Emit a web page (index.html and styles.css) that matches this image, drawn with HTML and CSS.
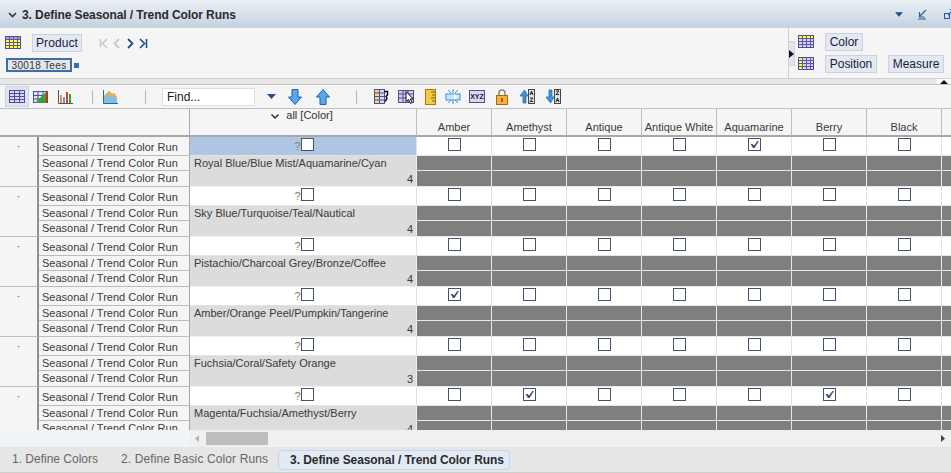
FILE: index.html
```html
<!DOCTYPE html>
<html lang="en">
<head>
<meta charset="utf-8">
<title>Define Seasonal / Trend Color Runs</title>
<link rel="stylesheet" href="styles.css">
</head>
<body>
<svg class="defs" width="0" height="0">
  <symbol id="check" viewBox="0 0 13 13"><path d="M2.500 6l2 0 1.500 1.500L9.500 3 11 3 6.500 10H5z" fill="#3f4f66"/></symbol>
  <symbol id="tbl" viewBox="0 0 16 14"><rect x=".5" y=".5" width="15" height="12" fill="#ffff30" stroke="#4f4a98"/><rect x="1" y="1" width="14" height="2" fill="#a8a4d8"/><path d="M.5 3.500h15M.5 6.500h15M.5 9.500h15M4.500.5v12M8.500.5v12M12.500.5v12" stroke="#5a56a8"/></symbol>
  <symbol id="tbl2" viewBox="0 0 16 14"><rect x=".5" y=".5" width="15" height="12" fill="#d5d3f0" stroke="#4f4a98"/><rect x="1" y="1" width="4" height="11" fill="#ffff30"/><path d="M.5 3.500h15M.5 6.500h15M.5 9.500h15M4.500.5v12M8.500.5v12M12.500.5v12" stroke="#5a56a8"/></symbol>
  <symbol id="tbl3" viewBox="0 0 16 14"><rect x=".5" y=".5" width="15" height="12" fill="#d5d3f0" stroke="#4f4a98"/><rect x="1" y="1" width="14" height="3" fill="#ffff30"/><path d="M.5 3.500h15M.5 6.500h15M.5 9.500h15M4.500.5v12M8.500.5v12M12.500.5v12" stroke="#5a56a8"/></symbol>
</svg>

<header class="titlebar">
  <svg class="chev" width="9" height="6" viewBox="0 0 9 6"><path d="M1 1l3.500 3.500L8 1" fill="none" stroke="#333" stroke-width="1.600"/></svg>
  <h1 class="title">3. Define Seasonal / Trend Color Runs</h1>
  <svg class="tb-drop" width="8" height="5" viewBox="0 0 9 5"><path d="M0 0h9L4.500 5z" fill="#1f4f8a"/></svg>
  <svg class="tb-min" width="9" height="11" viewBox="0 0 9 11"><path d="M8 1L2 7M1.500 3v5h5M0 10h8" fill="none" stroke="#27609c" stroke-width="1.200"/></svg>
  <svg class="tb-pop" width="9" height="11" viewBox="0 0 9 11"><path d="M.5 4.500h5v5h-5zM4 6l5-5M6 .5h3" fill="none" stroke="#27609c" stroke-width="1.200"/></svg>
</header>

<section class="pivot">
  <div class="pivot-left">
    <div class="pivot-row">
      <svg class="pv-icon" width="16" height="14"><use href="#tbl"/></svg>
      <span class="pbtn pb-prod">Product</span>
      <svg class="nav" width="50" height="11" viewBox="0 0 50 11">
        <path d="M1.500 1v8M8 1L3.500 5.500 8 10" fill="none" stroke="#c9c9c9" stroke-width="1.600"/>
        <path d="M20 1l-4.500 4.500L20 10" fill="none" stroke="#c9c9c9" stroke-width="1.800"/>
        <path d="M29 1l4.500 4.500L29 10" fill="none" stroke="#1f4f8a" stroke-width="1.800"/>
        <path d="M41 1l4.500 4.500L41 10M47.500 1v9" fill="none" stroke="#1f4f8a" stroke-width="1.600"/>
      </svg>
    </div>
    <div class="chip-row">
      <span class="chip">30018 Tees</span>
      <i class="chip-dot"></i>
    </div>
  </div>
  <div class="pivot-right">
    <span class="handle"><svg width="5" height="8" viewBox="0 0 5 8"><path d="M0 0l5 4-5 4z" fill="#111"/></svg></span>
    <div class="pr-rows">
      <div class="pr-row">
        <svg class="pv-icon" width="16" height="14"><use href="#tbl3"/></svg>
        <span class="pbtn pb-color">Color</span>
      </div>
      <div class="pr-row">
        <svg class="pv-icon" width="16" height="14"><use href="#tbl2"/></svg>
        <span class="pbtn pb-pos">Position</span>
        <span class="pbtn pb-meas">Measure</span>
      </div>
    </div>
  </div>
</section>

<div class="splitter">
  <span class="split-handle"><svg width="8" height="4" viewBox="0 0 8 4"><path d="M4 0l4 4H0z" fill="#111"/></svg></span>
</div>

<nav class="toolbar">
  <span class="tool sel"><svg width="16" height="13" viewBox="0 0 16 13"><rect x=".5" y=".5" width="15" height="12" fill="#d9d8f0" stroke="#4f4c9c"/><path d="M.5 3.500h15M.5 6.500h15M.5 9.500h15M5.500.5v12M10.500.5v12" stroke="#4f4c9c"/></svg></span>
  <span class="tool"><svg width="16" height="14" viewBox="0 0 16 14"><rect x=".5" y="1.500" width="14" height="11" fill="#e4e3f5" stroke="#4f4c9c"/><path d="M.5 5.500h14M.5 9h14M5 1.500v11M10 1.500v11" stroke="#4f4c9c"/><path d="M2 13L13 2v11z" fill="#3e9e3e"/><path d="M13 1h2v12h-2z" fill="#b8341e"/></svg></span>
  <span class="tool"><svg width="15" height="14" viewBox="0 0 15 14"><path d="M.5 0v13.500H15" fill="none" stroke="#555"/><path d="M2 5h2v8H2z" fill="#e9885a"/><path d="M5 7h2v6H5z" fill="#5aa0d8"/><path d="M8 2h2v11H8z" fill="#c9452e"/><path d="M11 4h2v9h-2z" fill="#3e9e3e"/></svg></span>
  <i class="sep s1"></i>
  <span class="tool"><svg width="15" height="14" viewBox="0 0 15 14"><path d="M.5 0v13.500H15" fill="none" stroke="#1f6f8a"/><path d="M1 13V6l5-5 3 3 2-1 3 4v6z" fill="#7fbfe8"/><path d="M1 6l5-5 3 3 2-1 3 4v2l-3-3-2 1-3-3-5 5z" fill="#eeb04a"/></svg></span>
  <i class="sep s2"></i>
  <span class="find">Find...</span>
  <svg class="find-drop" width="9" height="5" viewBox="0 0 9 5"><path d="M0 0h9L4.500 5z" fill="#1f4f8a"/></svg>
  <svg class="arrow a-down" width="14" height="16" viewBox="0 0 14 16"><path d="M4 .5h6V8h3.500L7 15.500.5 8H4z" fill="#58a8ee" stroke="#1f5fa8"/></svg>
  <svg class="arrow a-up" width="14" height="16" viewBox="0 0 14 16"><path d="M4 15.500h6V8h3.500L7 .5.5 8H4z" fill="#58a8ee" stroke="#1f5fa8"/></svg>
  <i class="sep s3"></i>
  <svg class="ic i1" width="16" height="15" viewBox="0 0 16 15"><rect x=".5" y=".5" width="10" height="14" fill="#f4d86a" stroke="#4f4c9c"/><rect x="6" y="1" width="4" height="13" fill="#d9d8f0"/><path d="M.5 4h10M.5 7.500h10M.5 11h10M5.500.5v14" stroke="#4f4c9c"/><path d="M10 2.500h3.500v3.500l-1.500 1.500 1 2-2 3" fill="none" stroke="#111" stroke-width="1.500"/></svg>
  <svg class="ic i2" width="16" height="14" viewBox="0 0 16 14"><rect x=".5" y=".5" width="15" height="12" fill="#cfcdea" stroke="#4f4c9c"/><path d="M.5 4h15M.5 8h15M5 .5v12M10 .5v12" stroke="#4f4c9c"/><path d="M8 1.500v10l2.500-2 2 4 1.800-1-2-3.500h3z" fill="#fff" stroke="#111" stroke-width="1"/></svg>
  <svg class="ic i3" width="11" height="16" viewBox="0 0 11 16"><rect x=".5" y=".5" width="10" height="15" fill="#f4c94a" stroke="#a8780a"/><path d="M6 3h4M7 6h3M6 9h4M7 12h3" stroke="#7a5a0a"/></svg>
  <svg class="ic i4" width="16" height="15" viewBox="0 0 16 15"><rect x="1" y="5" width="14" height="6" fill="#cfe6f8" stroke="#3c8fd0"/><path d="M9 5l3 3-3 3z" fill="#fff"/><path d="M8 0v4M8 11v4M3 1l3 3M13 1l-3 3M3 14l3-3M13 14l-3-3" stroke="#3c8fd0"/></svg>
  <span class="xyz">XYZ</span>
  <svg class="ic i6" width="12" height="16" viewBox="0 0 12 16"><path d="M3 7V4a3 3 0 016 0v3" fill="none" stroke="#8a8a8a" stroke-width="1.600"/><rect x=".5" y="6.500" width="11" height="9" fill="#f2b23c" stroke="#a86c0a"/><path d="M6 9v4" stroke="#7a4a0a" stroke-width="1.500"/></svg>
  <svg class="ic i7" width="16" height="15" viewBox="0 0 16 15"><path d="M4 14V7H1l4.500-6L9 7H7v7z" fill="#3f92e0" stroke="#1f5fa8" stroke-width=".7"/><rect x="9.500" y=".5" width="6" height="14" fill="#dfe3ec" stroke="#444"/><path d="M11 6l1.500-4L14 6M11 4.500h3M11 9h3l-3 3.500h3" fill="none" stroke="#222"/></svg>
  <svg class="ic i8" width="16" height="15" viewBox="0 0 16 15"><path d="M4 1v7H1l4.500 6L9 8H7V1z" fill="#3f92e0" stroke="#1f5fa8" stroke-width=".7"/><rect x="9.500" y=".5" width="6" height="14" fill="#dfe3ec" stroke="#444"/><path d="M11 2h3l-3 3.500h3M11 13l1.500-4 1.500 4M11 11.500h3" fill="none" stroke="#222"/></svg>
</nav>

<main class="grid">
  <div class="hd-corner"></div>
  <div class="hd-label"></div>
  <div class="hd-all"><svg width="8" height="5" viewBox="0 0 8 5"><path d="M.5.5L4 4 7.500.5" fill="none" stroke="#333" stroke-width="1.500"/></svg><span>all [Color]</span></div>
  <div class="hd">Amber</div><div class="hd">Amethyst</div><div class="hd">Antique</div><div class="hd">Antique White</div><div class="hd">Aquamarine</div><div class="hd">Berry</div><div class="hd">Black</div><div class="hd"></div>

  <div class="dot">·</div><div class="lab first">Seasonal / Trend Color Run</div><div class="q sel"><span class="qm">?</span><span class="cb"></span></div>
  <div class="c"><span class="cb"></span></div><div class="c"><span class="cb"></span></div><div class="c"><span class="cb"></span></div><div class="c"><span class="cb"></span></div><div class="c"><span class="cb on"><svg width="13" height="13"><use href="#check"/></svg></span></div><div class="c"><span class="cb"></span></div><div class="c"><span class="cb"></span></div><div class="c"><span class="cb"></span></div>
  <div class="lab">Seasonal / Trend Color Run</div><div class="name">Royal Blue/Blue Mist/Aquamarine/Cyan</div>
  <i class="g"></i><i class="g"></i><i class="g"></i><i class="g"></i><i class="g"></i><i class="g"></i><i class="g"></i><i class="g"></i>
  <div class="lab end">Seasonal / Trend Color Run</div><div class="num">4</div>
  <i class="g end"></i><i class="g end"></i><i class="g end"></i><i class="g end"></i><i class="g end"></i><i class="g end"></i><i class="g end"></i><i class="g end"></i>

  <div class="dot">·</div><div class="lab first">Seasonal / Trend Color Run</div><div class="q"><span class="qm">?</span><span class="cb"></span></div>
  <div class="c"><span class="cb"></span></div><div class="c"><span class="cb"></span></div><div class="c"><span class="cb"></span></div><div class="c"><span class="cb"></span></div><div class="c"><span class="cb"></span></div><div class="c"><span class="cb"></span></div><div class="c"><span class="cb"></span></div><div class="c"><span class="cb"></span></div>
  <div class="lab">Seasonal / Trend Color Run</div><div class="name">Sky Blue/Turquoise/Teal/Nautical</div>
  <i class="g"></i><i class="g"></i><i class="g"></i><i class="g"></i><i class="g"></i><i class="g"></i><i class="g"></i><i class="g"></i>
  <div class="lab end">Seasonal / Trend Color Run</div><div class="num">4</div>
  <i class="g end"></i><i class="g end"></i><i class="g end"></i><i class="g end"></i><i class="g end"></i><i class="g end"></i><i class="g end"></i><i class="g end"></i>

  <div class="dot">·</div><div class="lab first">Seasonal / Trend Color Run</div><div class="q"><span class="qm">?</span><span class="cb"></span></div>
  <div class="c"><span class="cb"></span></div><div class="c"><span class="cb"></span></div><div class="c"><span class="cb"></span></div><div class="c"><span class="cb"></span></div><div class="c"><span class="cb"></span></div><div class="c"><span class="cb"></span></div><div class="c"><span class="cb"></span></div><div class="c"><span class="cb"></span></div>
  <div class="lab">Seasonal / Trend Color Run</div><div class="name">Pistachio/Charcoal Grey/Bronze/Coffee</div>
  <i class="g"></i><i class="g"></i><i class="g"></i><i class="g"></i><i class="g"></i><i class="g"></i><i class="g"></i><i class="g"></i>
  <div class="lab end">Seasonal / Trend Color Run</div><div class="num">4</div>
  <i class="g end"></i><i class="g end"></i><i class="g end"></i><i class="g end"></i><i class="g end"></i><i class="g end"></i><i class="g end"></i><i class="g end"></i>

  <div class="dot">·</div><div class="lab first">Seasonal / Trend Color Run</div><div class="q"><span class="qm">?</span><span class="cb"></span></div>
  <div class="c"><span class="cb on"><svg width="13" height="13"><use href="#check"/></svg></span></div><div class="c"><span class="cb"></span></div><div class="c"><span class="cb"></span></div><div class="c"><span class="cb"></span></div><div class="c"><span class="cb"></span></div><div class="c"><span class="cb"></span></div><div class="c"><span class="cb"></span></div><div class="c"><span class="cb"></span></div>
  <div class="lab">Seasonal / Trend Color Run</div><div class="name">Amber/Orange Peel/Pumpkin/Tangerine</div>
  <i class="g"></i><i class="g"></i><i class="g"></i><i class="g"></i><i class="g"></i><i class="g"></i><i class="g"></i><i class="g"></i>
  <div class="lab end">Seasonal / Trend Color Run</div><div class="num">4</div>
  <i class="g end"></i><i class="g end"></i><i class="g end"></i><i class="g end"></i><i class="g end"></i><i class="g end"></i><i class="g end"></i><i class="g end"></i>

  <div class="dot">·</div><div class="lab first">Seasonal / Trend Color Run</div><div class="q"><span class="qm">?</span><span class="cb"></span></div>
  <div class="c"><span class="cb"></span></div><div class="c"><span class="cb"></span></div><div class="c"><span class="cb"></span></div><div class="c"><span class="cb"></span></div><div class="c"><span class="cb"></span></div><div class="c"><span class="cb"></span></div><div class="c"><span class="cb"></span></div><div class="c"><span class="cb"></span></div>
  <div class="lab">Seasonal / Trend Color Run</div><div class="name">Fuchsia/Coral/Safety Orange</div>
  <i class="g"></i><i class="g"></i><i class="g"></i><i class="g"></i><i class="g"></i><i class="g"></i><i class="g"></i><i class="g"></i>
  <div class="lab end">Seasonal / Trend Color Run</div><div class="num">3</div>
  <i class="g end"></i><i class="g end"></i><i class="g end"></i><i class="g end"></i><i class="g end"></i><i class="g end"></i><i class="g end"></i><i class="g end"></i>

  <div class="dot">·</div><div class="lab first">Seasonal / Trend Color Run</div><div class="q"><span class="qm">?</span><span class="cb"></span></div>
  <div class="c"><span class="cb"></span></div><div class="c"><span class="cb on"><svg width="13" height="13"><use href="#check"/></svg></span></div><div class="c"><span class="cb"></span></div><div class="c"><span class="cb"></span></div><div class="c"><span class="cb"></span></div><div class="c"><span class="cb on"><svg width="13" height="13"><use href="#check"/></svg></span></div><div class="c"><span class="cb"></span></div><div class="c"><span class="cb"></span></div>
  <div class="lab">Seasonal / Trend Color Run</div><div class="name">Magenta/Fuchsia/Amethyst/Berry</div>
  <i class="g"></i><i class="g"></i><i class="g"></i><i class="g"></i><i class="g"></i><i class="g"></i><i class="g"></i><i class="g"></i>
  <div class="lab end">Seasonal / Trend Color Run</div><div class="num">4</div>
  <i class="g end"></i><i class="g end"></i><i class="g end"></i><i class="g end"></i><i class="g end"></i><i class="g end"></i><i class="g end"></i><i class="g end"></i>
</main>

<div class="hscroll">
  <div class="hs-left"></div>
  <div class="hs-track">
    <svg class="hs-arrow" width="4" height="7" viewBox="0 0 4 7"><path d="M4 0L0 3.500 4 7z" fill="#b5b5b5"/></svg>
    <span class="hs-thumb"></span>
    <svg class="hs-next" width="4" height="7" viewBox="0 0 4 7"><path d="M0 0l4 3.500L0 7z" fill="#444"/></svg>
  </div>
</div>

<footer class="tabs">
  <span class="tab t1">1. Define Colors</span>
  <span class="tab t2">2. Define Basic Color Runs</span>
  <span class="tab active">3. Define Seasonal / Trend Color Runs</span>
</footer>
</body>
</html>
```
FILE: styles.css
```css
* { box-sizing: border-box; }
html, body { margin: 0; padding: 0; }
body {
  width: 951px;
  height: 473px;
  overflow: hidden;
  display: flex;
  flex-direction: column;
  background: #fff;
  font-family: "Liberation Sans", Arial, sans-serif;
  font-size: 11px;
  color: #333;
}
.defs { position: absolute; }

.titlebar {
  height: 28px;
  flex: none;
  display: flex;
  align-items: center;
  border-top: 1px solid #f0f0f0;
  background: linear-gradient(#e9eff6, #c6d1df);
  padding-left: 8px;
}
.chev { margin-right: 5px; }
.title { margin: 0; font-size: 12px; font-weight: bold; letter-spacing: -.08px; color: #2b2b2b; white-space: nowrap; }
.tb-drop { margin-left: auto; margin-right: 15px; }
.tb-min { margin-right: 17px; }
.tb-pop { margin-right: -2px; }

.pivot {
  height: 50px;
  flex: none;
  display: flex;
  background: #f5f5f5;
}
.pivot-left { width: 788px; padding: 6px 0 0 5px; }
.pivot-row { display: flex; align-items: center; height: 18px; }
.pv-icon { flex: none; }
.pbtn {
  height: 18px;
  display: inline-flex;
  align-items: center;
  justify-content: center;
  background: #e3e9f2;
  border: 1px solid #ccd2da;
  font-size: 12px;
  color: #1c1c3a;
}
.pb-prod { width: 50px; margin-left: 11px; letter-spacing: .1px; }
.pb-color { width: 38px; margin-left: 11px; }
.pb-pos { width: 52px; margin-left: 11px; letter-spacing: -.05px; }
.pb-meas { width: 56px; margin-left: 11px; }
.nav { margin-left: 17px; }
.chip-row { display: flex; align-items: center; margin: 6px 0 0 1px; }
.chip {
  height: 14px;
  width: 66px;
  display: flex;
  align-items: center;
  justify-content: center;
  background: #e3e7ec;
  border: 2px solid #3c6ea8;
  font-size: 10px;
  letter-spacing: .35px;
  color: #333;
}
.chip-dot { width: 5px; height: 5px; margin-left: 2px; background: #3c6ea8; }

.pivot-right {
  flex: 1;
  display: flex;
  align-items: flex-start;
  border-left: 1px solid #cfcfcf;
}
.handle {
  width: 6px;
  height: 25px;
  margin-top: 13px;
  display: flex;
  align-items: center;
  background: #dfe6f0;
  border: 1px solid #cfd6e0;
  border-left: 0;
}
.pr-rows { margin: 5px 0 0 3px; }
.pr-row { display: flex; align-items: center; height: 18px; margin-bottom: 4px; }

.splitter {
  height: 7px;
  flex: none;
  display: flex;
  justify-content: flex-end;
  background: #e7e7e7;
  border-top: 1px solid #d0d0d0;
  border-bottom: 1px solid #c4c4c4;
}
.split-handle {
  width: 14px;
  height: 5px;
  display: flex;
  align-items: center;
  justify-content: center;
  background: #fff;
}

.toolbar {
  height: 23px;
  flex: none;
  display: flex;
  align-items: center;
  background: #f5f5f5;
  padding-left: 5px;
}
.tool {
  width: 24px;
  height: 21px;
  flex: none;
  display: flex;
  align-items: center;
  justify-content: center;
}
.tool.sel { background: #dce4ef; border: 1px solid #ccd4e0; }
.sep { width: 1px; height: 14px; flex: none; background: #b8b8b8; }
.s1 { margin: 0 5px 0 15px; }
.s2 { margin: 0 16px 0 23px; }
.s3 { margin: 0 17px 0 26px; }
.find {
  width: 93px;
  height: 18px;
  flex: none;
  display: flex;
  align-items: center;
  padding-left: 4px;
  background: #fff;
  border: 1px solid #dcdfe4;
  font-size: 12px;
  color: #222;
}
.find-drop { margin-left: 12px; flex: none; }
.a-down { margin-left: 12px; flex: none; }
.a-up { margin-left: 14px; flex: none; }
.ic { flex: none; }
.i2 { margin-left: 8px; }
.i3 { margin-left: 11px; }
.i4 { margin-left: 9px; }
.xyz {
  width: 16px;
  height: 13px;
  margin-left: 8px;
  flex: none;
  display: flex;
  align-items: center;
  justify-content: center;
  background: #d9d8f0;
  border: 1px solid #4f4c9c;
  font-size: 7px;
  font-weight: bold;
  color: #222;
}
.i6 { margin-left: 11px; }
.i7 { margin-left: 11px; }
.i8 { margin-left: 10px; }

.grid {
  height: 322px;
  flex: none;
  display: grid;
  grid-template-columns: 39px 151px 227px repeat(8, 75px);
  grid-template-rows: 29px repeat(6, 19px 15px 16px);
  overflow: hidden;
  background: #f5f5f5;
}
.hd-corner, .hd-label, .hd-all, .hd {
  border-top: 1px solid #c0c0c0;
  border-bottom: 2px solid #a8a8a8;
  background: #f5f5f5;
}
.hd-label { border-right: 1px solid #a8a8a8; }
.hd-all {
  display: flex;
  align-items: flex-start;
  justify-content: center;
  gap: 7px;
  padding-right: 2px;
  line-height: 13px;
  border-right: 1px solid #bdbdbd;
}
.hd-all svg { margin-top: 5px; }
.hd {
  display: flex;
  align-items: flex-end;
  justify-content: center;
  padding-bottom: 2px;
  border-right: 1px solid #bdbdbd;
  color: #3a3a3a;
  white-space: nowrap;
}
.dot {
  grid-row: span 3;
  display: flex;
  justify-content: center;
  align-items: flex-start;
  padding-top: 3px;
  color: #555;
  border-right: 2px solid #8f8f8f;
  border-bottom: 1px solid #bdbdbd;
  background: #f5f5f5;
}
.lab {
  display: flex;
  align-items: center;
  padding-left: 3px;
  background: #f5f5f5;
  border-right: 1px solid #a8a8a8;
  border-bottom: 1px solid #bdbdbd;
  color: #3a3a3a;
  white-space: nowrap;
  overflow: hidden;
}
.lab.first { padding-top: 1px; }
.lab.end { padding-bottom: 1px; }
.q {
  display: flex;
  align-items: flex-start;
  justify-content: center;
  padding: 1px 0 0 2px;
  background: #fff;
  border-right: 1px solid #e3e3e3;
  border-bottom: 1px solid #e3e3e3;
}
.q.sel { background: #afc6e3; }
.qm { color: #8a7a5a; margin-top: 2px; }
.cb {
  width: 13px;
  height: 13px;
  flex: none;
  display: block;
  background: #fff;
  border: 1px solid #42536b;
}
.cb svg { display: block; margin: -1px; }
.c {
  display: flex;
  align-items: flex-start;
  justify-content: center;
  padding-top: 1px;
  background: #fff;
  border-right: 1px solid #e3e3e3;
  border-bottom: 1px solid #e3e3e3;
}
.name, .num {
  display: flex;
  align-items: center;
  background: #dcdcdc;
  border-right: 1px solid #f0f0f0;
  color: #3a3a3a;
  white-space: nowrap;
  padding: 0 0 1px 4px;
}
.num { justify-content: flex-end; padding: 0 3px 0 0; border-bottom: 1px solid #f0f0f0; }
.g {
  display: block;
  background: #7f7f7f;
  border-right: 1px solid #e8e8e8;
  border-bottom: 1px solid #e8e8e8;
}

.hscroll {
  height: 17px;
  flex: none;
  display: flex;
  background: #f0f0f0;
}
.hs-left { width: 190px; background: #f0f3f8; }
.hs-track { flex: 1; display: flex; align-items: center; padding-left: 5px; }
.hs-thumb { width: 62px; height: 13px; margin-left: 7px; background: #bdbdbd; }
.hs-next { margin-left: auto; margin-right: 6px; }

.tabs {
  height: 26px;
  flex: none;
  display: flex;
  align-items: flex-start;
  gap: 22px;
  padding: 3px 0 0 12px;
  background: #e6e6e6;
  border-bottom: 1px solid #cfcfcf;
  font-size: 12px;
  line-height: 18px;
  color: #666;
  white-space: nowrap;
}
.t1 { width: 87px; }
.t2 { width: 147px; letter-spacing: .12px; }
.tab.active {
  width: 232px;
  height: 20px;
  margin-left: -12px;
  padding-left: 6px;
  display: flex;
  align-items: center;
  justify-content: center;
  background: #e2eaf5;
  border: 1px solid #c8d5e6;
  border-radius: 4px;
  font-weight: bold;
  letter-spacing: -.08px;
  color: #2b2b2b;
}
```
